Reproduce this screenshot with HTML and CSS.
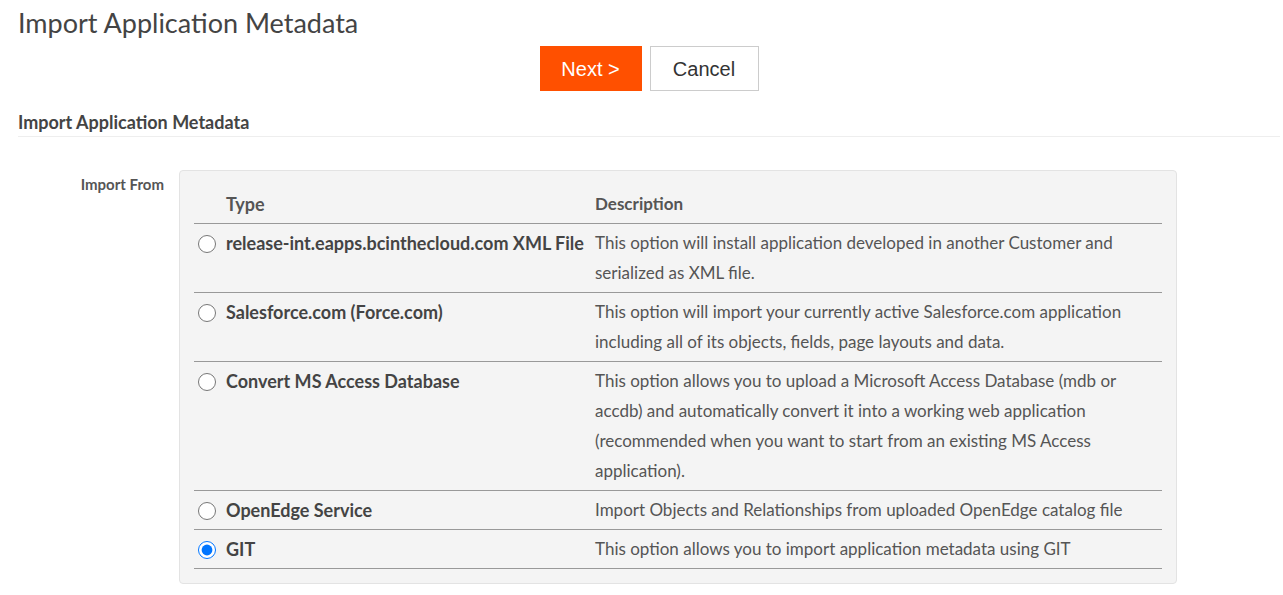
FILE: index.html
```html
<!DOCTYPE html>
<html>
<head>
<meta charset="utf-8">
<link rel="stylesheet" href="styles.css">
</head>
<body>
<div class="page">
  <h1 class="title">Import Application Metadata</h1>
  <div class="actions">
    <button class="btn btn-primary">Next &gt;</button>
    <button class="btn btn-default">Cancel</button>
  </div>
  <h2 class="section">Import Application Metadata</h2>
  <div class="form-row">
    <div class="form-label">Import From</div>
    <div class="panel">
      <table class="types">
        <colgroup>
          <col class="c-radio">
          <col class="c-type">
          <col>
        </colgroup>
        <thead>
          <tr>
            <th></th>
            <th class="th-type">Type</th>
            <th class="th-desc">Description</th>
          </tr>
        </thead>
        <tbody>
          <tr>
            <td class="td-radio"><input type="radio" name="src"></td>
            <td class="td-type">release-int.eapps.bcinthecloud.com XML File</td>
            <td class="td-desc">This option will install application developed in another Customer and serialized as XML file.</td>
          </tr>
          <tr>
            <td class="td-radio"><input type="radio" name="src"></td>
            <td class="td-type">Salesforce.com (Force.com)</td>
            <td class="td-desc">This option will import your currently active Salesforce.com application including all of its objects, fields, page layouts and data.</td>
          </tr>
          <tr>
            <td class="td-radio"><input type="radio" name="src"></td>
            <td class="td-type">Convert MS Access Database</td>
            <td class="td-desc">This option allows you to upload a Microsoft Access Database (mdb or accdb) and automatically convert it into a working web application (recommended when you want to start from an existing MS Access application).</td>
          </tr>
          <tr>
            <td class="td-radio"><input type="radio" name="src"></td>
            <td class="td-type">OpenEdge Service</td>
            <td class="td-desc">Import Objects and Relationships from uploaded OpenEdge catalog file</td>
          </tr>
          <tr>
            <td class="td-radio"><input type="radio" name="src" checked></td>
            <td class="td-type">GIT</td>
            <td class="td-desc">This option allows you to import application metadata using GIT</td>
          </tr>
        </tbody>
      </table>
    </div>
  </div>
</div>
</body>
</html>
```

FILE: styles.css
```css
html, body {
  margin: 0;
  padding: 0;
  background: #fff;
}
body {
  font-family: Lato, "Open Sans", sans-serif;
  color: #444;
}
.page {
  padding: 0 3px 0 18px;
}
.title {
  margin: 7px 0 0;
  font-size: 27px;
  line-height: 32px;
  font-weight: 400;
  color: #444;
}
.actions {
  margin-top: 7px;
  display: flex;
  justify-content: center;
  gap: 8px;
}
.btn {
  height: 45px;
  font-family: "Liberation Sans", Arial, sans-serif;
  font-size: 20px;
  padding: 1px 0 0;
  cursor: pointer;
}
.btn-primary {
  width: 102px;
  background: #ff5000;
  color: #fff;
  border: none;
}
.btn-default {
  width: 109px;
  background: #fff;
  color: #333;
  border: 1px solid #ccc;
}
.section {
  margin: 21px 0 0;
  padding-bottom: 4px;
  font-size: 18px;
  line-height: 20px;
  font-weight: 700;
  color: #444;
  border-bottom: 1px solid #eee;
}
.form-row {
  margin-top: 33px;
  display: flex;
  align-items: flex-start;
  gap: 15px;
}
.form-label {
  width: 146px;
  text-align: right;
  padding-top: 4px;
  font-size: 15px;
  line-height: 20px;
  font-weight: 700;
  color: #555;
}
.panel {
  width: 968px;
  padding: 14px;
  background: #f4f4f4;
  border: 1px solid #e3e3e3;
  border-radius: 4px;
}
.types {
  width: 100%;
  border-collapse: collapse;
  table-layout: fixed;
}
.c-radio { width: 28px; }
.c-type { width: 369px; }
.types th {
  text-align: left;
  padding: 4px;
  line-height: 30px;
  border-bottom: 1px solid #999;
  color: #555;
}
.th-type { font-size: 18px; font-weight: 700; }
.th-desc { font-size: 17px; font-weight: 700; color: #666; }
.types td {
  padding: 4px;
  line-height: 30px;
  border-bottom: 1px solid #999;
  vertical-align: top;
}
.td-radio input {
  display: block;
  width: 18px;
  height: 18px;
  margin: 7px 0 0;
}
.td-type {
  font-size: 18px;
  font-weight: 700;
  color: #444;
  white-space: nowrap;
}
.td-desc {
  font-size: 17px;
  color: #555;
}
```
